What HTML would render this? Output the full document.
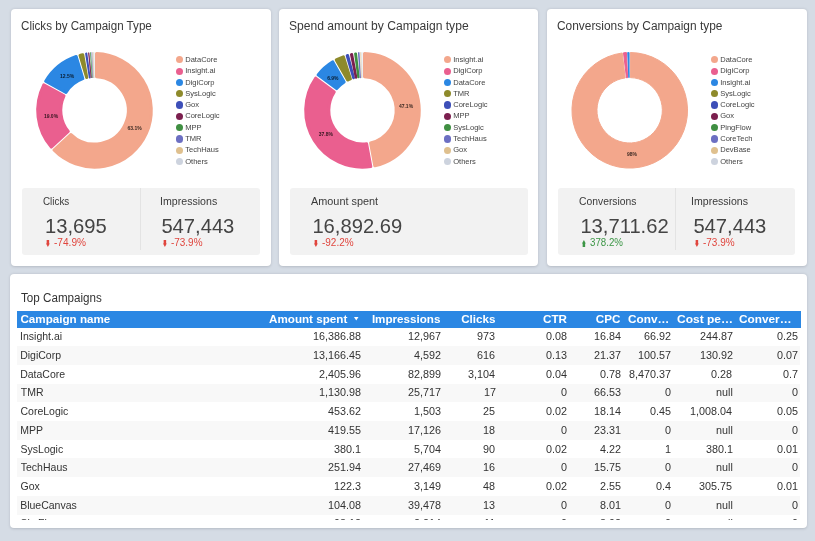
<!DOCTYPE html><html><head><meta charset="utf-8"><style>
html,body{margin:0;padding:0;}
body{width:815px;height:541px;background:#d5dce5;position:relative;overflow:hidden;font-family:"Liberation Sans", sans-serif;}
.t{position:absolute;line-height:1;white-space:nowrap;transform-origin:0 0;}
.layer{position:absolute;left:0;top:0;width:815px;height:541px;will-change:transform;}
.card{position:absolute;background:#fff;border-radius:4px;box-shadow:0 0.6px 2.6px rgba(30,30,40,0.17);}
.kbox{position:absolute;background:#f2f2f2;border-radius:3px;}
.dot{position:absolute;width:7.2px;height:7.2px;border-radius:50%;}
.vline{position:absolute;width:1px;background:#e3e3e3;}
svg{position:absolute;left:0;top:0;}
</style></head><body>

<div class="card" style="left:10.9px;top:8.6px;width:260.4px;height:257.2px"></div>
<div class="card" style="left:278.9px;top:8.6px;width:259.6px;height:257.2px"></div>
<div class="card" style="left:546.6px;top:8.6px;width:260.4px;height:257.2px"></div>
<div class="card" style="left:9.8px;top:273.9px;width:797px;height:254.4px"></div>
<svg width="815" height="541" viewBox="0 0 815 541">
<path d="M96.50,53.54 A56.80,56.80 0 1 1 53.94,150.06 L71.01,134.46 A33.70,33.70 0 1 0 96.50,76.66 Z" fill="#f3a78c" stroke="#f3a78c" stroke-width="3.00" stroke-linejoin="round"/>
<path d="M51.24,147.11 A56.80,56.80 0 0 1 43.74,84.80 L64.03,95.90 A33.70,33.70 0 0 0 68.31,131.51 Z" fill="#ea5f8f" stroke="#ea5f8f" stroke-width="3.00" stroke-linejoin="round"/>
<path d="M45.67,81.29 A56.80,56.80 0 0 1 76.17,56.54 L82.86,78.68 A33.70,33.70 0 0 0 65.95,92.39 Z" fill="#2b87e3" stroke="#2b87e3" stroke-width="3.00" stroke-linejoin="round"/>
<path d="M80.00,55.38 A56.80,56.80 0 0 1 82.77,54.72 L86.75,77.50 A33.70,33.70 0 0 0 86.68,77.52 Z" fill="#8e8a2b" stroke="#8e8a2b" stroke-width="3.00" stroke-linejoin="round"/>
<path d="M86.02,53.53 A57.40,57.40 0 0 1 86.42,53.48 L89.72,77.54 A33.10,33.10 0 0 0 89.72,77.54 Z" fill="#3d4fb8" stroke="#3d4fb8" stroke-width="1.81" stroke-linejoin="round"/>
<path d="M88.62,52.68 A57.92,57.92 0 0 1 88.79,52.66 L91.24,77.89 A32.58,32.58 0 0 0 91.24,77.89 Z" fill="#7b1f4e" stroke="#7b1f4e" stroke-width="0.75" stroke-linejoin="round"/>
<path d="M90.40,52.39 A58.06,58.06 0 0 1 90.51,52.38 L92.24,77.93 A32.44,32.44 0 0 0 92.24,77.93 Z" fill="#3f8f42" stroke="#3f8f42" stroke-width="0.49" stroke-linejoin="round"/>
<path d="M91.85,52.26 A58.10,58.10 0 0 1 91.85,52.26 L93.02,77.93 A32.40,32.40 0 0 0 93.02,77.93 Z" fill="#6c6fc2" stroke="#6c6fc2" stroke-width="0.40" stroke-linejoin="round"/>
<path d="M92.91,52.22 A58.10,58.10 0 0 1 92.91,52.22 L93.61,77.91 A32.40,32.40 0 0 0 93.61,77.91 Z" fill="#dfc08e" stroke="#dfc08e" stroke-width="0.40" stroke-linejoin="round"/>
<path d="M93.93,52.20 A58.10,58.10 0 0 1 93.93,52.20 L94.18,77.90 A32.40,32.40 0 0 0 94.18,77.90 Z" fill="#cdd3de" stroke="#cdd3de" stroke-width="0.40" stroke-linejoin="round"/>
<path d="M364.50,53.54 A56.80,56.80 0 0 1 374.75,165.76 L370.56,143.02 A33.70,33.70 0 0 0 364.50,76.66 Z" fill="#f3a78c" stroke="#f3a78c" stroke-width="3.00" stroke-linejoin="round"/>
<path d="M370.82,166.49 A56.80,56.80 0 0 1 315.70,78.11 L334.28,91.88 A33.70,33.70 0 0 0 366.63,143.75 Z" fill="#ea5f8f" stroke="#ea5f8f" stroke-width="3.00" stroke-linejoin="round"/>
<path d="M318.08,74.90 A56.80,56.80 0 0 1 332.79,61.89 L344.18,82.01 A33.70,33.70 0 0 0 336.66,88.66 Z" fill="#2b87e3" stroke="#2b87e3" stroke-width="3.00" stroke-linejoin="round"/>
<path d="M336.27,59.92 A56.80,56.80 0 0 1 343.39,56.81 L350.40,78.85 A33.70,33.70 0 0 0 347.66,80.04 Z" fill="#8e8a2b" stroke="#8e8a2b" stroke-width="3.00" stroke-linejoin="round"/>
<path d="M347.10,55.54 A56.88,56.88 0 0 1 347.67,55.38 L353.57,77.89 A33.62,33.62 0 0 0 353.57,77.89 Z" fill="#3d4fb8" stroke="#3d4fb8" stroke-width="2.83" stroke-linejoin="round"/>
<path d="M351.28,54.43 A56.99,56.99 0 0 1 351.83,54.32 L356.06,77.41 A33.51,33.51 0 0 0 356.06,77.41 Z" fill="#7b1f4e" stroke="#7b1f4e" stroke-width="2.63" stroke-linejoin="round"/>
<path d="M355.30,53.67 A57.09,57.09 0 0 1 355.82,53.60 L358.44,77.14 A33.41,33.41 0 0 0 358.44,77.14 Z" fill="#3f8f42" stroke="#3f8f42" stroke-width="2.42" stroke-linejoin="round"/>
<path d="M358.59,52.76 A57.67,57.67 0 0 1 358.88,52.74 L360.36,77.54 A32.83,32.83 0 0 0 360.36,77.54 Z" fill="#6c6fc2" stroke="#6c6fc2" stroke-width="1.25" stroke-linejoin="round"/>
<path d="M360.64,52.23 A58.10,58.10 0 0 1 360.64,52.23 L361.46,77.92 A32.40,32.40 0 0 0 361.46,77.92 Z" fill="#dfc08e" stroke="#dfc08e" stroke-width="0.40" stroke-linejoin="round"/>
<path d="M361.90,52.20 A58.10,58.10 0 0 1 361.90,52.20 L362.16,77.90 A32.40,32.40 0 0 0 362.16,77.90 Z" fill="#cdd3de" stroke="#cdd3de" stroke-width="0.40" stroke-linejoin="round"/>
<path d="M630.35,52.50 A57.80,57.80 0 1 1 622.21,52.99 L625.18,77.91 A32.70,32.70 0 1 0 630.35,77.61 Z" fill="#f3a78c" stroke="#f3a78c" stroke-width="1.00" stroke-linejoin="round"/>
<path d="M623.50,52.83 A57.80,57.80 0 0 1 626.44,52.59 L627.57,77.67 A32.70,32.70 0 0 0 626.47,77.76 Z" fill="#ea5f8f" stroke="#ea5f8f" stroke-width="1.00" stroke-linejoin="round"/>
<path d="M627.74,52.53 A57.80,57.80 0 0 1 629.05,52.50 L629.05,77.61 A32.70,32.70 0 0 0 628.87,77.61 Z" fill="#2b87e3" stroke="#2b87e3" stroke-width="1.00" stroke-linejoin="round"/>
</svg>
<div class="dot" style="left:175.50px;top:56.20px;background:#f3a78c"></div>
<div class="dot" style="left:175.50px;top:67.51px;background:#ea5f8f"></div>
<div class="dot" style="left:175.50px;top:78.82px;background:#2b87e3"></div>
<div class="dot" style="left:175.50px;top:90.13px;background:#8e8a2b"></div>
<div class="dot" style="left:175.50px;top:101.44px;background:#3d4fb8"></div>
<div class="dot" style="left:175.50px;top:112.75px;background:#7b1f4e"></div>
<div class="dot" style="left:175.50px;top:124.06px;background:#3f8f42"></div>
<div class="dot" style="left:175.50px;top:135.37px;background:#6c6fc2"></div>
<div class="dot" style="left:175.50px;top:146.68px;background:#dfc08e"></div>
<div class="dot" style="left:175.50px;top:157.99px;background:#cdd3de"></div>
<div class="dot" style="left:443.50px;top:56.20px;background:#f3a78c"></div>
<div class="dot" style="left:443.50px;top:67.51px;background:#ea5f8f"></div>
<div class="dot" style="left:443.50px;top:78.82px;background:#2b87e3"></div>
<div class="dot" style="left:443.50px;top:90.13px;background:#8e8a2b"></div>
<div class="dot" style="left:443.50px;top:101.44px;background:#3d4fb8"></div>
<div class="dot" style="left:443.50px;top:112.75px;background:#7b1f4e"></div>
<div class="dot" style="left:443.50px;top:124.06px;background:#3f8f42"></div>
<div class="dot" style="left:443.50px;top:135.37px;background:#6c6fc2"></div>
<div class="dot" style="left:443.50px;top:146.68px;background:#dfc08e"></div>
<div class="dot" style="left:443.50px;top:157.99px;background:#cdd3de"></div>
<div class="dot" style="left:710.50px;top:56.20px;background:#f3a78c"></div>
<div class="dot" style="left:710.50px;top:67.51px;background:#ea5f8f"></div>
<div class="dot" style="left:710.50px;top:78.82px;background:#2b87e3"></div>
<div class="dot" style="left:710.50px;top:90.13px;background:#8e8a2b"></div>
<div class="dot" style="left:710.50px;top:101.44px;background:#3d4fb8"></div>
<div class="dot" style="left:710.50px;top:112.75px;background:#7b1f4e"></div>
<div class="dot" style="left:710.50px;top:124.06px;background:#3f8f42"></div>
<div class="dot" style="left:710.50px;top:135.37px;background:#6c6fc2"></div>
<div class="dot" style="left:710.50px;top:146.68px;background:#dfc08e"></div>
<div class="dot" style="left:710.50px;top:157.99px;background:#cdd3de"></div>
<div class="kbox" style="left:22.2px;top:188.1px;width:237.6px;height:66.8px"></div>
<div class="vline" style="left:139.8px;top:188.1px;height:62px"></div>
<div class="kbox" style="left:289.8px;top:188.1px;width:238px;height:66.8px"></div>
<div class="kbox" style="left:557.8px;top:188.1px;width:237.4px;height:66.8px"></div>
<div class="vline" style="left:675.0px;top:188.1px;height:62px"></div>
<svg style="left:46.4px;top:240.0px" width="3.8" height="7" viewBox="0 0 3.8 7"><path d="M0.65,0 L3.15,0 L3.15,3.6 L3.8,3.6 L1.9,7 L0,3.6 L0.65,3.6 Z" fill="#e0463e"/></svg>
<svg style="left:163.2px;top:240.0px" width="3.8" height="7" viewBox="0 0 3.8 7"><path d="M0.65,0 L3.15,0 L3.15,3.6 L3.8,3.6 L1.9,7 L0,3.6 L0.65,3.6 Z" fill="#e0463e"/></svg>
<svg style="left:314.2px;top:240.0px" width="3.8" height="7" viewBox="0 0 3.8 7"><path d="M0.65,0 L3.15,0 L3.15,3.6 L3.8,3.6 L1.9,7 L0,3.6 L0.65,3.6 Z" fill="#e0463e"/></svg>
<svg style="left:581.8px;top:240.0px" width="3.8" height="7" viewBox="0 0 3.8 7"><path d="M1.9,0 L3.8,3.4 L3.15,3.4 L3.15,7 L0.65,7 L0.65,3.4 L0,3.4 Z" fill="#3c9646"/></svg>
<svg style="left:694.8px;top:240.0px" width="3.8" height="7" viewBox="0 0 3.8 7"><path d="M0.65,0 L3.15,0 L3.15,3.6 L3.8,3.6 L1.9,7 L0,3.6 L0.65,3.6 Z" fill="#e0463e"/></svg>
<div style="position:absolute;left:16.8px;top:311.1px;width:784px;height:16.8px;background:#2b87e3"></div>
<div style="position:absolute;left:0;top:0;width:815px;height:519.8px;overflow:hidden;will-change:transform">
<div class="t" style="left:20.05px;top:331.20px;font-size:10.5px;color:#333;font-weight:normal;">Insight.ai</div>
<div class="t" style="left:313.19px;top:332.20px;font-size:10.2px;color:#333;font-weight:normal;transform:scaleX(1.0600);">16,386.88</div>
<div class="t" style="left:407.83px;top:332.20px;font-size:10.2px;color:#333;font-weight:normal;transform:scaleX(1.0600);">12,967</div>
<div class="t" style="left:477.45px;top:332.20px;font-size:10.2px;color:#333;font-weight:normal;transform:scaleX(1.0600);">973</div>
<div class="t" style="left:546.05px;top:332.20px;font-size:10.2px;color:#333;font-weight:normal;transform:scaleX(1.0600);">0.08</div>
<div class="t" style="left:594.13px;top:332.20px;font-size:10.2px;color:#333;font-weight:normal;transform:scaleX(1.0600);">16.84</div>
<div class="t" style="left:644.04px;top:332.20px;font-size:10.2px;color:#333;font-weight:normal;transform:scaleX(1.0600);">66.92</div>
<div class="t" style="left:699.53px;top:332.20px;font-size:10.2px;color:#333;font-weight:normal;transform:scaleX(1.0600);">244.87</div>
<div class="t" style="left:776.85px;top:332.20px;font-size:10.2px;color:#333;font-weight:normal;transform:scaleX(1.0600);">0.25</div>
<div style="position:absolute;left:16.8px;top:346.12px;width:783.5px;height:18.72px;background:#f8f8f8"></div>
<div class="t" style="left:20.16px;top:349.92px;font-size:10.5px;color:#333;font-weight:normal;">DigiCorp</div>
<div class="t" style="left:313.19px;top:350.92px;font-size:10.2px;color:#333;font-weight:normal;transform:scaleX(1.0600);">13,166.45</div>
<div class="t" style="left:413.84px;top:350.92px;font-size:10.2px;color:#333;font-weight:normal;transform:scaleX(1.0600);">4,592</div>
<div class="t" style="left:477.45px;top:350.92px;font-size:10.2px;color:#333;font-weight:normal;transform:scaleX(1.0600);">616</div>
<div class="t" style="left:546.05px;top:350.92px;font-size:10.2px;color:#333;font-weight:normal;transform:scaleX(1.0600);">0.13</div>
<div class="t" style="left:594.34px;top:350.92px;font-size:10.2px;color:#333;font-weight:normal;transform:scaleX(1.0600);">21.37</div>
<div class="t" style="left:638.03px;top:350.92px;font-size:10.2px;color:#333;font-weight:normal;transform:scaleX(1.0600);">100.57</div>
<div class="t" style="left:699.53px;top:350.92px;font-size:10.2px;color:#333;font-weight:normal;transform:scaleX(1.0600);">130.92</div>
<div class="t" style="left:776.96px;top:350.92px;font-size:10.2px;color:#333;font-weight:normal;transform:scaleX(1.0600);">0.07</div>
<div class="t" style="left:20.16px;top:368.64px;font-size:10.5px;color:#333;font-weight:normal;">DataCore</div>
<div class="t" style="left:319.20px;top:369.64px;font-size:10.2px;color:#333;font-weight:normal;transform:scaleX(1.0600);">2,405.96</div>
<div class="t" style="left:407.83px;top:369.64px;font-size:10.2px;color:#333;font-weight:normal;transform:scaleX(1.0600);">82,899</div>
<div class="t" style="left:468.33px;top:369.64px;font-size:10.2px;color:#333;font-weight:normal;transform:scaleX(1.0600);">3,104</div>
<div class="t" style="left:545.94px;top:369.64px;font-size:10.2px;color:#333;font-weight:normal;transform:scaleX(1.0600);">0.04</div>
<div class="t" style="left:600.25px;top:369.64px;font-size:10.2px;color:#333;font-weight:normal;transform:scaleX(1.0600);">0.78</div>
<div class="t" style="left:629.01px;top:369.64px;font-size:10.2px;color:#333;font-weight:normal;transform:scaleX(1.0600);">8,470.37</div>
<div class="t" style="left:711.45px;top:369.64px;font-size:10.2px;color:#333;font-weight:normal;transform:scaleX(1.0600);">0.28</div>
<div class="t" style="left:782.97px;top:369.64px;font-size:10.2px;color:#333;font-weight:normal;transform:scaleX(1.0600);">0.7</div>
<div style="position:absolute;left:16.8px;top:383.56px;width:783.5px;height:18.72px;background:#f8f8f8"></div>
<div class="t" style="left:20.79px;top:387.36px;font-size:10.5px;color:#333;font-weight:normal;">TMR</div>
<div class="t" style="left:319.20px;top:388.36px;font-size:10.2px;color:#333;font-weight:normal;transform:scaleX(1.0600);">1,130.98</div>
<div class="t" style="left:407.83px;top:388.36px;font-size:10.2px;color:#333;font-weight:normal;transform:scaleX(1.0600);">25,717</div>
<div class="t" style="left:483.57px;top:388.36px;font-size:10.2px;color:#333;font-weight:normal;transform:scaleX(1.0600);">17</div>
<div class="t" style="left:561.08px;top:388.36px;font-size:10.2px;color:#333;font-weight:normal;transform:scaleX(1.0600);">0</div>
<div class="t" style="left:594.23px;top:388.36px;font-size:10.2px;color:#333;font-weight:normal;transform:scaleX(1.0600);">66.53</div>
<div class="t" style="left:664.98px;top:388.36px;font-size:10.2px;color:#333;font-weight:normal;transform:scaleX(1.0600);">0</div>
<div class="t" style="left:715.94px;top:388.36px;font-size:10.2px;color:#333;font-weight:normal;transform:scaleX(1.0600);">null</div>
<div class="t" style="left:791.88px;top:388.36px;font-size:10.2px;color:#333;font-weight:normal;transform:scaleX(1.0600);">0</div>
<div class="t" style="left:20.48px;top:406.08px;font-size:10.5px;color:#333;font-weight:normal;">CoreLogic</div>
<div class="t" style="left:328.33px;top:407.08px;font-size:10.2px;color:#333;font-weight:normal;transform:scaleX(1.0600);">453.62</div>
<div class="t" style="left:413.73px;top:407.08px;font-size:10.2px;color:#333;font-weight:normal;transform:scaleX(1.0600);">1,503</div>
<div class="t" style="left:483.46px;top:407.08px;font-size:10.2px;color:#333;font-weight:normal;transform:scaleX(1.0600);">25</div>
<div class="t" style="left:546.16px;top:407.08px;font-size:10.2px;color:#333;font-weight:normal;transform:scaleX(1.0600);">0.02</div>
<div class="t" style="left:594.13px;top:407.08px;font-size:10.2px;color:#333;font-weight:normal;transform:scaleX(1.0600);">18.14</div>
<div class="t" style="left:649.95px;top:407.08px;font-size:10.2px;color:#333;font-weight:normal;transform:scaleX(1.0600);">0.45</div>
<div class="t" style="left:690.30px;top:407.08px;font-size:10.2px;color:#333;font-weight:normal;transform:scaleX(1.0600);">1,008.04</div>
<div class="t" style="left:776.85px;top:407.08px;font-size:10.2px;color:#333;font-weight:normal;transform:scaleX(1.0600);">0.05</div>
<div style="position:absolute;left:16.8px;top:421.00px;width:783.5px;height:18.72px;background:#f8f8f8"></div>
<div class="t" style="left:20.16px;top:424.80px;font-size:10.5px;color:#333;font-weight:normal;">MPP</div>
<div class="t" style="left:328.22px;top:425.80px;font-size:10.2px;color:#333;font-weight:normal;transform:scaleX(1.0600);">419.55</div>
<div class="t" style="left:407.72px;top:425.80px;font-size:10.2px;color:#333;font-weight:normal;transform:scaleX(1.0600);">17,126</div>
<div class="t" style="left:483.46px;top:425.80px;font-size:10.2px;color:#333;font-weight:normal;transform:scaleX(1.0600);">18</div>
<div class="t" style="left:561.08px;top:425.80px;font-size:10.2px;color:#333;font-weight:normal;transform:scaleX(1.0600);">0</div>
<div class="t" style="left:594.34px;top:425.80px;font-size:10.2px;color:#333;font-weight:normal;transform:scaleX(1.0600);">23.31</div>
<div class="t" style="left:664.98px;top:425.80px;font-size:10.2px;color:#333;font-weight:normal;transform:scaleX(1.0600);">0</div>
<div class="t" style="left:715.94px;top:425.80px;font-size:10.2px;color:#333;font-weight:normal;transform:scaleX(1.0600);">null</div>
<div class="t" style="left:791.88px;top:425.80px;font-size:10.2px;color:#333;font-weight:normal;transform:scaleX(1.0600);">0</div>
<div class="t" style="left:20.58px;top:443.52px;font-size:10.5px;color:#333;font-weight:normal;">SysLogic</div>
<div class="t" style="left:334.34px;top:444.52px;font-size:10.2px;color:#333;font-weight:normal;transform:scaleX(1.0600);">380.1</div>
<div class="t" style="left:413.63px;top:444.52px;font-size:10.2px;color:#333;font-weight:normal;transform:scaleX(1.0600);">5,704</div>
<div class="t" style="left:483.46px;top:444.52px;font-size:10.2px;color:#333;font-weight:normal;transform:scaleX(1.0600);">90</div>
<div class="t" style="left:546.16px;top:444.52px;font-size:10.2px;color:#333;font-weight:normal;transform:scaleX(1.0600);">0.02</div>
<div class="t" style="left:600.36px;top:444.52px;font-size:10.2px;color:#333;font-weight:normal;transform:scaleX(1.0600);">4.22</div>
<div class="t" style="left:665.09px;top:444.52px;font-size:10.2px;color:#333;font-weight:normal;transform:scaleX(1.0600);">1</div>
<div class="t" style="left:705.54px;top:444.52px;font-size:10.2px;color:#333;font-weight:normal;transform:scaleX(1.0600);">380.1</div>
<div class="t" style="left:776.96px;top:444.52px;font-size:10.2px;color:#333;font-weight:normal;transform:scaleX(1.0600);">0.01</div>
<div style="position:absolute;left:16.8px;top:458.44px;width:783.5px;height:18.72px;background:#f8f8f8"></div>
<div class="t" style="left:20.79px;top:462.24px;font-size:10.5px;color:#333;font-weight:normal;">TechHaus</div>
<div class="t" style="left:328.11px;top:463.24px;font-size:10.2px;color:#333;font-weight:normal;transform:scaleX(1.0600);">251.94</div>
<div class="t" style="left:407.83px;top:463.24px;font-size:10.2px;color:#333;font-weight:normal;transform:scaleX(1.0600);">27,469</div>
<div class="t" style="left:483.46px;top:463.24px;font-size:10.2px;color:#333;font-weight:normal;transform:scaleX(1.0600);">16</div>
<div class="t" style="left:561.08px;top:463.24px;font-size:10.2px;color:#333;font-weight:normal;transform:scaleX(1.0600);">0</div>
<div class="t" style="left:594.23px;top:463.24px;font-size:10.2px;color:#333;font-weight:normal;transform:scaleX(1.0600);">15.75</div>
<div class="t" style="left:664.98px;top:463.24px;font-size:10.2px;color:#333;font-weight:normal;transform:scaleX(1.0600);">0</div>
<div class="t" style="left:715.94px;top:463.24px;font-size:10.2px;color:#333;font-weight:normal;transform:scaleX(1.0600);">null</div>
<div class="t" style="left:791.88px;top:463.24px;font-size:10.2px;color:#333;font-weight:normal;transform:scaleX(1.0600);">0</div>
<div class="t" style="left:20.48px;top:480.96px;font-size:10.5px;color:#333;font-weight:normal;">Gox</div>
<div class="t" style="left:334.23px;top:481.96px;font-size:10.2px;color:#333;font-weight:normal;transform:scaleX(1.0600);">122.3</div>
<div class="t" style="left:413.84px;top:481.96px;font-size:10.2px;color:#333;font-weight:normal;transform:scaleX(1.0600);">3,149</div>
<div class="t" style="left:483.46px;top:481.96px;font-size:10.2px;color:#333;font-weight:normal;transform:scaleX(1.0600);">48</div>
<div class="t" style="left:546.16px;top:481.96px;font-size:10.2px;color:#333;font-weight:normal;transform:scaleX(1.0600);">0.02</div>
<div class="t" style="left:600.25px;top:481.96px;font-size:10.2px;color:#333;font-weight:normal;transform:scaleX(1.0600);">2.55</div>
<div class="t" style="left:655.85px;top:481.96px;font-size:10.2px;color:#333;font-weight:normal;transform:scaleX(1.0600);">0.4</div>
<div class="t" style="left:699.42px;top:481.96px;font-size:10.2px;color:#333;font-weight:normal;transform:scaleX(1.0600);">305.75</div>
<div class="t" style="left:776.96px;top:481.96px;font-size:10.2px;color:#333;font-weight:normal;transform:scaleX(1.0600);">0.01</div>
<div style="position:absolute;left:16.8px;top:495.88px;width:783.5px;height:18.72px;background:#f8f8f8"></div>
<div class="t" style="left:20.16px;top:499.68px;font-size:10.5px;color:#333;font-weight:normal;">BlueCanvas</div>
<div class="t" style="left:328.22px;top:500.68px;font-size:10.2px;color:#333;font-weight:normal;transform:scaleX(1.0600);">104.08</div>
<div class="t" style="left:407.72px;top:500.68px;font-size:10.2px;color:#333;font-weight:normal;transform:scaleX(1.0600);">39,478</div>
<div class="t" style="left:483.46px;top:500.68px;font-size:10.2px;color:#333;font-weight:normal;transform:scaleX(1.0600);">13</div>
<div class="t" style="left:561.08px;top:500.68px;font-size:10.2px;color:#333;font-weight:normal;transform:scaleX(1.0600);">0</div>
<div class="t" style="left:600.36px;top:500.68px;font-size:10.2px;color:#333;font-weight:normal;transform:scaleX(1.0600);">8.01</div>
<div class="t" style="left:664.98px;top:500.68px;font-size:10.2px;color:#333;font-weight:normal;transform:scaleX(1.0600);">0</div>
<div class="t" style="left:715.94px;top:500.68px;font-size:10.2px;color:#333;font-weight:normal;transform:scaleX(1.0600);">null</div>
<div class="t" style="left:791.88px;top:500.68px;font-size:10.2px;color:#333;font-weight:normal;transform:scaleX(1.0600);">0</div>
<div class="t" style="left:20.58px;top:518.40px;font-size:10.5px;color:#333;font-weight:normal;">SkyFlow</div>
<div class="t" style="left:334.34px;top:519.40px;font-size:10.2px;color:#333;font-weight:normal;transform:scaleX(1.0600);">98.12</div>
<div class="t" style="left:413.63px;top:519.40px;font-size:10.2px;color:#333;font-weight:normal;transform:scaleX(1.0600);">2,214</div>
<div class="t" style="left:484.38px;top:519.40px;font-size:10.2px;color:#333;font-weight:normal;transform:scaleX(1.0600);">11</div>
<div class="t" style="left:561.08px;top:519.40px;font-size:10.2px;color:#333;font-weight:normal;transform:scaleX(1.0600);">0</div>
<div class="t" style="left:600.36px;top:519.40px;font-size:10.2px;color:#333;font-weight:normal;transform:scaleX(1.0600);">8.92</div>
<div class="t" style="left:664.98px;top:519.40px;font-size:10.2px;color:#333;font-weight:normal;transform:scaleX(1.0600);">0</div>
<div class="t" style="left:715.94px;top:519.40px;font-size:10.2px;color:#333;font-weight:normal;transform:scaleX(1.0600);">null</div>
<div class="t" style="left:791.88px;top:519.40px;font-size:10.2px;color:#333;font-weight:normal;transform:scaleX(1.0600);">0</div>
</div>
<svg style="left:353.6px;top:317.4px" width="5" height="4" viewBox="0 0 5 4"><path d="M0,0 L4.5,0 L2.25,3.4 Z" fill="#fff"/></svg>
<div class="layer">
<div class="t" style="left:21.47px;top:19.80px;font-size:12.0px;color:#3a3a3a;font-weight:normal;transform:scaleX(0.9676);">Clicks by Campaign Type</div>
<div class="t" style="left:289.32px;top:19.80px;font-size:12.0px;color:#3a3a3a;font-weight:normal;transform:scaleX(1.0085);">Spend amount by Campaign type</div>
<div class="t" style="left:556.70px;top:19.80px;font-size:12.0px;color:#3a3a3a;font-weight:normal;transform:scaleX(0.9920);">Conversions by Campaign type</div>
<div class="t" style="left:127.48px;top:126.00px;font-size:5.0px;color:rgba(0,0,0,0.78);font-weight:bold;">63.1%</div>
<div class="t" style="left:43.91px;top:114.10px;font-size:5.0px;color:rgba(0,0,0,0.78);font-weight:bold;">19.0%</div>
<div class="t" style="left:60.01px;top:74.20px;font-size:5.0px;color:rgba(0,0,0,0.78);font-weight:bold;">12.5%</div>
<div class="t" style="left:398.93px;top:103.90px;font-size:5.0px;color:rgba(0,0,0,0.78);font-weight:bold;">47.1%</div>
<div class="t" style="left:318.71px;top:132.00px;font-size:5.0px;color:rgba(0,0,0,0.78);font-weight:bold;">37.8%</div>
<div class="t" style="left:327.17px;top:75.90px;font-size:5.0px;color:rgba(0,0,0,0.78);font-weight:bold;">6.9%</div>
<div class="t" style="left:626.97px;top:152.00px;font-size:5.0px;color:rgba(0,0,0,0.78);font-weight:bold;">98%</div>
<div class="t" style="left:185.20px;top:55.90px;font-size:7.55px;color:#444;font-weight:normal;">DataCore</div>
<div class="t" style="left:185.20px;top:67.21px;font-size:7.55px;color:#444;font-weight:normal;">Insight.ai</div>
<div class="t" style="left:185.20px;top:78.52px;font-size:7.55px;color:#444;font-weight:normal;">DigiCorp</div>
<div class="t" style="left:185.20px;top:89.83px;font-size:7.55px;color:#444;font-weight:normal;">SysLogic</div>
<div class="t" style="left:185.20px;top:101.14px;font-size:7.55px;color:#444;font-weight:normal;">Gox</div>
<div class="t" style="left:185.20px;top:112.45px;font-size:7.55px;color:#444;font-weight:normal;">CoreLogic</div>
<div class="t" style="left:185.20px;top:123.76px;font-size:7.55px;color:#444;font-weight:normal;">MPP</div>
<div class="t" style="left:185.20px;top:135.07px;font-size:7.55px;color:#444;font-weight:normal;">TMR</div>
<div class="t" style="left:185.20px;top:146.38px;font-size:7.55px;color:#444;font-weight:normal;">TechHaus</div>
<div class="t" style="left:185.20px;top:157.69px;font-size:7.55px;color:#444;font-weight:normal;">Others</div>
<div class="t" style="left:453.20px;top:55.90px;font-size:7.55px;color:#444;font-weight:normal;">Insight.ai</div>
<div class="t" style="left:453.20px;top:67.21px;font-size:7.55px;color:#444;font-weight:normal;">DigiCorp</div>
<div class="t" style="left:453.20px;top:78.52px;font-size:7.55px;color:#444;font-weight:normal;">DataCore</div>
<div class="t" style="left:453.20px;top:89.83px;font-size:7.55px;color:#444;font-weight:normal;">TMR</div>
<div class="t" style="left:453.20px;top:101.14px;font-size:7.55px;color:#444;font-weight:normal;">CoreLogic</div>
<div class="t" style="left:453.20px;top:112.45px;font-size:7.55px;color:#444;font-weight:normal;">MPP</div>
<div class="t" style="left:453.20px;top:123.76px;font-size:7.55px;color:#444;font-weight:normal;">SysLogic</div>
<div class="t" style="left:453.20px;top:135.07px;font-size:7.55px;color:#444;font-weight:normal;">TechHaus</div>
<div class="t" style="left:453.20px;top:146.38px;font-size:7.55px;color:#444;font-weight:normal;">Gox</div>
<div class="t" style="left:453.20px;top:157.69px;font-size:7.55px;color:#444;font-weight:normal;">Others</div>
<div class="t" style="left:720.20px;top:55.90px;font-size:7.55px;color:#444;font-weight:normal;">DataCore</div>
<div class="t" style="left:720.20px;top:67.21px;font-size:7.55px;color:#444;font-weight:normal;">DigiCorp</div>
<div class="t" style="left:720.20px;top:78.52px;font-size:7.55px;color:#444;font-weight:normal;">Insight.ai</div>
<div class="t" style="left:720.20px;top:89.83px;font-size:7.55px;color:#444;font-weight:normal;">SysLogic</div>
<div class="t" style="left:720.20px;top:101.14px;font-size:7.55px;color:#444;font-weight:normal;">CoreLogic</div>
<div class="t" style="left:720.20px;top:112.45px;font-size:7.55px;color:#444;font-weight:normal;">Gox</div>
<div class="t" style="left:720.20px;top:123.76px;font-size:7.55px;color:#444;font-weight:normal;">PingFlow</div>
<div class="t" style="left:720.20px;top:135.07px;font-size:7.55px;color:#444;font-weight:normal;">CoreTech</div>
<div class="t" style="left:720.20px;top:146.38px;font-size:7.55px;color:#444;font-weight:normal;">DevBase</div>
<div class="t" style="left:720.20px;top:157.69px;font-size:7.55px;color:#444;font-weight:normal;">Others</div>
<div class="t" style="left:43.21px;top:197.00px;font-size:10.2px;color:#3a3a3a;font-weight:normal;transform:scaleX(0.9666);">Clicks</div>
<div class="t" style="left:44.99px;top:216.00px;font-size:20.2px;color:#444;font-weight:normal;">13,695</div>
<div class="t" style="left:53.80px;top:238.10px;font-size:10.0px;color:#e0463e;font-weight:normal;transform:scaleX(1.0099);">-74.9%</div>
<div class="t" style="left:159.54px;top:197.00px;font-size:10.2px;color:#3a3a3a;font-weight:normal;transform:scaleX(1.0417);">Impressions</div>
<div class="t" style="left:161.39px;top:216.00px;font-size:20.2px;color:#444;font-weight:normal;">547,443</div>
<div class="t" style="left:170.90px;top:238.10px;font-size:10.0px;color:#e0463e;font-weight:normal;transform:scaleX(0.9938);">-73.9%</div>
<div class="t" style="left:311.10px;top:197.00px;font-size:10.2px;color:#3a3a3a;font-weight:normal;transform:scaleX(1.0673);">Amount spent</div>
<div class="t" style="left:312.39px;top:216.00px;font-size:20.2px;color:#444;font-weight:normal;">16,892.69</div>
<div class="t" style="left:321.80px;top:238.10px;font-size:10.0px;color:#e0463e;font-weight:normal;transform:scaleX(0.9970);">-92.2%</div>
<div class="t" style="left:578.58px;top:197.00px;font-size:10.2px;color:#3a3a3a;font-weight:normal;transform:scaleX(1.0147);">Conversions</div>
<div class="t" style="left:580.39px;top:216.00px;font-size:20.2px;color:#444;font-weight:normal;">13,711.62</div>
<div class="t" style="left:589.91px;top:238.10px;font-size:10.0px;color:#3c9646;font-weight:normal;transform:scaleX(0.9723);">378.2%</div>
<div class="t" style="left:691.45px;top:197.00px;font-size:10.2px;color:#3a3a3a;font-weight:normal;transform:scaleX(1.0379);">Impressions</div>
<div class="t" style="left:693.39px;top:216.00px;font-size:20.2px;color:#444;font-weight:normal;">547,443</div>
<div class="t" style="left:702.80px;top:238.10px;font-size:10.0px;color:#e0463e;font-weight:normal;transform:scaleX(0.9970);">-73.9%</div>
<div class="t" style="left:20.97px;top:291.60px;font-size:12.0px;color:#333;font-weight:normal;transform:scaleX(0.9701);">Top Campaigns</div>
<div class="t" style="left:20.43px;top:313.10px;font-size:11.65px;color:#fff;font-weight:bold;">Campaign name</div>
<div class="t" style="left:269.03px;top:313.10px;font-size:11.65px;color:#fff;font-weight:bold;">Amount spent</div>
<div class="t" style="left:371.89px;top:313.10px;font-size:11.65px;color:#fff;font-weight:bold;">Impressions</div>
<div class="t" style="left:461.20px;top:313.10px;font-size:11.65px;color:#fff;font-weight:bold;">Clicks</div>
<div class="t" style="left:543.00px;top:313.10px;font-size:11.65px;color:#fff;font-weight:bold;">CTR</div>
<div class="t" style="left:595.86px;top:313.10px;font-size:11.65px;color:#fff;font-weight:bold;">CPC</div>
<div class="t" style="left:628.13px;top:313.10px;font-size:11.65px;color:#fff;font-weight:bold;transform:scaleX(1.0121);">Conv…</div>
<div class="t" style="left:677.42px;top:313.10px;font-size:11.65px;color:#fff;font-weight:bold;transform:scaleX(1.0300);">Cost pe…</div>
<div class="t" style="left:739.33px;top:313.10px;font-size:11.65px;color:#fff;font-weight:bold;transform:scaleX(1.0132);">Conver…</div>
</div>
</body></html>
